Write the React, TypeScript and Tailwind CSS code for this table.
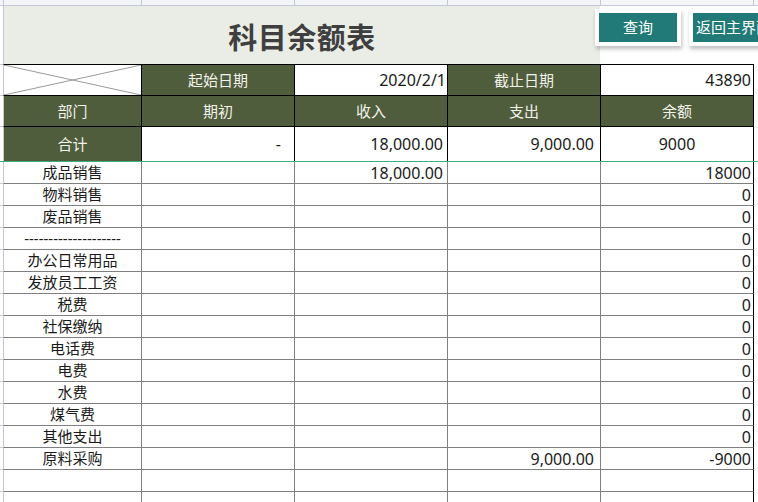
const font = { fontFamily: '"Noto Sans", "Noto Sans CJK SC", sans-serif' };

type DataRow = [string, string, string, string, string];

const dataRows: DataRow[] = [
  ["成品销售", "", "18,000.00", "", "18000"],
  ["物料销售", "", "", "", "0"],
  ["废品销售", "", "", "", "0"],
  ["--------------------", "", "", "", "0"],
  ["办公日常用品", "", "", "", "0"],
  ["发放员工工资", "", "", "", "0"],
  ["税费", "", "", "", "0"],
  ["社保缴纳", "", "", "", "0"],
  ["电话费", "", "", "", "0"],
  ["电费", "", "", "", "0"],
  ["水费", "", "", "", "0"],
  ["煤气费", "", "", "", "0"],
  ["其他支出", "", "", "", "0"],
  ["原料采购", "", "", "9,000.00", "-9000"],
  ["", "", "", "", ""],
  ["", "", "", "", ""],
];

function Margin({ h }: { h: string }) {
  return <div className={`w-[3px] shrink-0 border-b border-[#c3c7d6] ${h}`} />;
}

function GreenCell({ children, w = "w-[153px]" }: { children?: React.ReactNode; w?: string }) {
  return (
    <div className={`${w} shrink-0 flex items-center justify-center border-r border-b border-black bg-[#4f5d3d] text-[15px] text-[#f2f2ea]`}>
      {children}
    </div>
  );
}

function WhiteCell({ children, cls = "justify-end pr-[2px]" }: { children?: React.ReactNode; cls?: string }) {
  return (
    <div className={`w-[153px] shrink-0 flex items-center border-r border-b border-black bg-white text-[16px] text-[#1a1a1a] ${cls}`}>
      {children}
    </div>
  );
}

export default function App() {
  return (
    <div className="relative w-[758px] h-[502px] overflow-hidden bg-white" style={font}>
      {/* top strip (row above the sheet) */}
      <div className="flex h-[6px] bg-[#f4f5f9]">
        <Margin h="h-[6px]" />
        <div className="w-[139px] shrink-0 border-l border-r border-b border-[#c3c7d6]" />
        <div className="w-[153px] shrink-0 border-r border-b border-[#c3c7d6]" />
        <div className="w-[153px] shrink-0 border-r border-b border-[#c3c7d6]" />
        <div className="w-[153px] shrink-0 border-r border-b border-[#c3c7d6]" />
        <div className="w-[153px] shrink-0 border-r border-b border-[#c3c7d6]" />
        <div className="flex-1 border-b border-[#c3c7d6]" />
      </div>

      {/* title */}
      <div className="flex h-[59px]">
        <Margin h="h-[59px]" />
        <div className="w-[597px] shrink-0 flex items-center justify-center pt-[3px] border-l border-l-[#c3c7d6] border-b border-b-black bg-[#eaede6]">
          <span className="text-[29px] font-bold tracking-[0.5px] text-[#3f3f3f]" style={{ fontFamily: '"Noto Sans CJK SC", sans-serif' }}>
            科目余额表
          </span>
        </div>
        <div className="w-[154px] shrink-0 border-b border-black" />
      </div>

      {/* row 1: dates */}
      <div className="flex h-[31px]">
        <Margin h="h-[31px]" />
        <div className="w-[139px] shrink-0 border-l border-l-[#c3c7d6] border-r border-r-black border-b border-b-black bg-white">
          <svg width="137" height="30" viewBox="0 0 137 30" className="block">
            <line x1="0" y1="0" x2="137" y2="30" stroke="#9a9a9a" strokeWidth="1" />
            <line x1="137" y1="0" x2="0" y2="30" stroke="#9a9a9a" strokeWidth="1" />
          </svg>
        </div>
        <GreenCell>起始日期</GreenCell>
        <WhiteCell cls="justify-end pr-[1px]">2020/2/1</WhiteCell>
        <GreenCell>截止日期</GreenCell>
        <WhiteCell cls="justify-end pr-[2px]">43890</WhiteCell>
      </div>

      {/* row 2: headers */}
      <div className="flex h-[31px]">
        <Margin h="h-[31px]" />
        <div className="w-[139px] shrink-0 flex items-center justify-center border-l border-l-[#c3c7d6] border-r border-r-black border-b border-b-black bg-[#4f5d3d] text-[15px] text-[#f2f2ea]">
          部门
        </div>
        <GreenCell>期初</GreenCell>
        <GreenCell>收入</GreenCell>
        <GreenCell>支出</GreenCell>
        <GreenCell>余额</GreenCell>
      </div>

      {/* row 3: totals */}
      <div className="flex h-[34px]">
        <div className="w-[3px] shrink-0" />
        <div className="w-[139px] shrink-0 flex items-center justify-center border-l border-l-[#c3c7d6] border-r border-r-black bg-[#4f5d3d] text-[15px] text-[#f2f2ea]">
          合计
        </div>
        <div className="w-[153px] shrink-0 flex items-center justify-end pr-[13px] border-r border-black text-[16px] text-[#1a1a1a]">-</div>
        <div className="w-[153px] shrink-0 flex items-center justify-end pr-[4px] border-r border-black text-[16px] text-[#1a1a1a]">18,000.00</div>
        <div className="w-[153px] shrink-0 flex items-center justify-end pr-[6px] border-r border-black text-[16px] text-[#1a1a1a]">9,000.00</div>
        <div className="w-[153px] shrink-0 flex items-center justify-center border-r border-black text-[16px] text-[#1a1a1a]">9000</div>
      </div>

      {/* frozen pane line */}
      <div className="h-px bg-[#3fae7c]" />

      {/* data rows */}
      {dataRows.map((r, i) => (
        <div key={i} className="flex h-[22px]">
          <Margin h="h-[22px]" />
          <div className="w-[139px] shrink-0 flex items-center justify-center border-l border-l-[#c3c7d6] border-r border-b border-r-[#808080] border-b-[#808080] text-[15px] text-[#1a1a1a] leading-none">
            {r[0]}
          </div>
          <div className="w-[153px] shrink-0 flex items-center justify-end pr-[4px] border-r border-b border-[#808080] text-[16px] text-[#1a1a1a] leading-none">
            {r[1]}
          </div>
          <div className="w-[153px] shrink-0 flex items-center justify-end pr-[4px] border-r border-b border-[#808080] text-[16px] text-[#1a1a1a] leading-none">
            {r[2]}
          </div>
          <div className="w-[153px] shrink-0 flex items-center justify-end pr-[6px] border-r border-b border-[#808080] text-[16px] text-[#1a1a1a] leading-none">
            {r[3]}
          </div>
          <div className="w-[153px] shrink-0 flex items-center justify-end pr-[2px] border-r border-r-black border-b border-b-[#808080] text-[16px] text-[#1a1a1a] leading-none">
            {r[4]}
          </div>
        </div>
      ))}

      {/* buttons over the sheet */}
      <div className="absolute left-[595px] top-[9px] bg-white p-[4px] shadow-[1px_3px_4px_rgba(0,0,0,0.25)]">
        <div className="w-[78px] h-[29px] flex items-center justify-center bg-[#217a77] text-[15px] text-white">查询</div>
      </div>
      <div className="absolute left-[689px] top-[9px] bg-white p-[4px] shadow-[1px_3px_4px_rgba(0,0,0,0.25)]">
        <div className="w-[84px] h-[29px] flex items-center pl-[3px] bg-[#217a77] text-[15px] text-white whitespace-nowrap">返回主界面</div>
      </div>
    </div>
  );
}
